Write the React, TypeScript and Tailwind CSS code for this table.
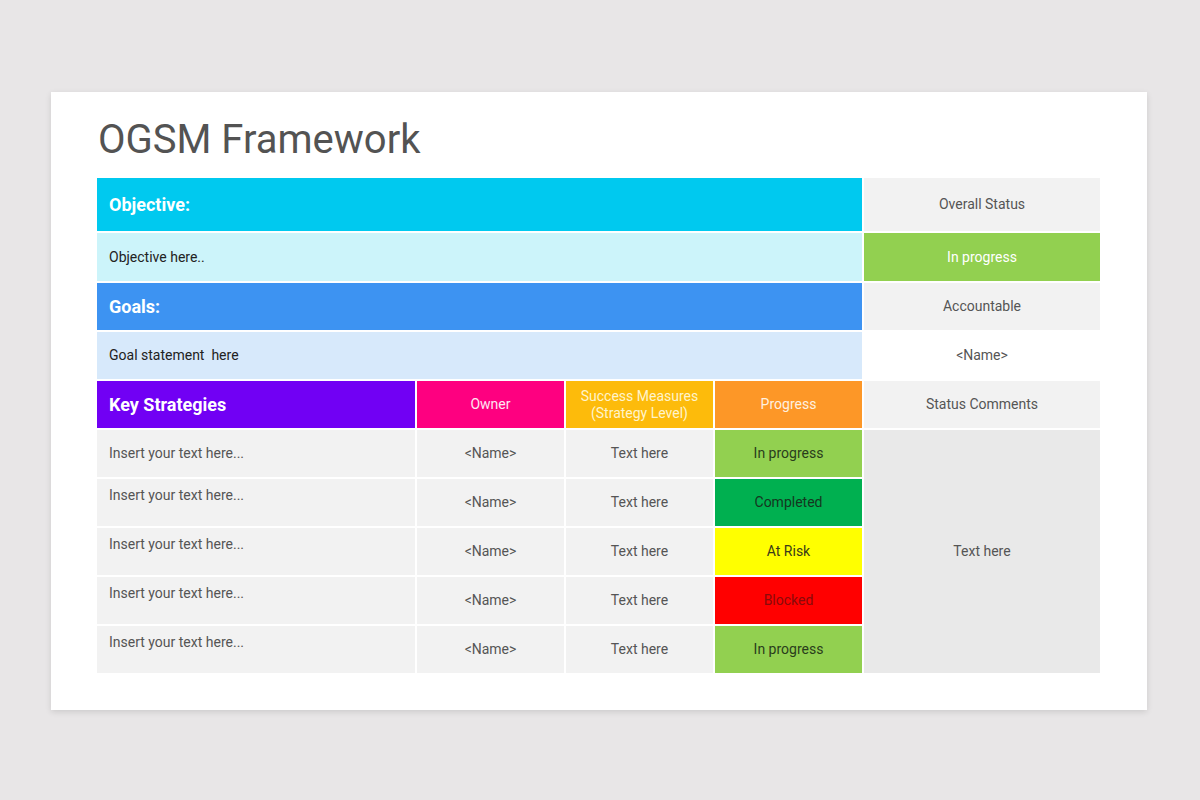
import React from "react";

const font = { fontFamily: "Roboto, 'Liberation Sans', sans-serif" };

const rows = [
  { status: "In progress", bg: "bg-[#92d050]", fg: "text-[#2a3d1c]", center: true },
  { status: "Completed", bg: "bg-[#00b050]", fg: "text-[#15361f]", center: false },
  { status: "At Risk", bg: "bg-[#ffff00]", fg: "text-[#3a3a1a]", center: false },
  { status: "Blocked", bg: "bg-[#ff0000]", fg: "text-[#8a0a0a]", center: false },
  { status: "In progress", bg: "bg-[#92d050]", fg: "text-[#2a3d1c]", center: false },
];

export default function App() {
  return (
    <div className="w-[1200px] h-[800px] bg-[#e8e6e7] pt-[92px] pl-[51px]" style={font}>
      <div className="w-[1096px] h-[618px] bg-white shadow-[0_2px_6px_rgba(0,0,0,0.12)] pl-[46px] pt-[28px]">
        <h1 className="ml-[1px] text-[40px] leading-[40px] text-[#535353] font-normal">OGSM Framework</h1>
        <div className="mt-[18px] grid grid-cols-[318px_147px_147px_147px_236px] grid-rows-[53px_48px_47px_47px_47px_47px_47px_47px_47px_47px] gap-[2px] text-[14px]">
          <div className="col-span-4 bg-[#00c9ef] flex items-center pl-3 text-white font-bold text-[18px]">Objective:</div>
          <div className="bg-[#f2f2f2] flex items-center justify-center text-[#555]">Overall Status</div>

          <div className="col-span-4 bg-[#ccf4fa] flex items-center pl-3 text-[#222]">Objective here..</div>
          <div className="bg-[#92d050] flex items-center justify-center text-white">In progress</div>

          <div className="col-span-4 bg-[#3d93f2] flex items-center pl-3 text-white font-bold text-[18px]">Goals:</div>
          <div className="bg-[#f2f2f2] flex items-center justify-center text-[#555]">Accountable</div>

          <div className="col-span-4 bg-[#d7e9fb] flex items-center pl-3 text-[#222]">Goal statement&nbsp; here</div>
          <div className="bg-white flex items-center justify-center text-[#555]">&lt;Name&gt;</div>

          <div className="bg-[#7100f4] flex items-center pl-3 text-white font-bold text-[18px]">Key Strategies</div>
          <div className="bg-[#fe0080] flex items-center justify-center text-[#ffe6f2]">Owner</div>
          <div className="bg-[#fdbb0b] flex items-center justify-center text-center text-[#fff4cc] leading-[17px]">
            Success Measures
            <br />
            (Strategy Level)
          </div>
          <div className="bg-[#fd9727] flex items-center justify-center text-[#fff1e0]">Progress</div>
          <div className="bg-[#f2f2f2] flex items-center justify-center text-[#555]">Status Comments</div>

          {rows.map((r, i) => (
            <React.Fragment key={i}>
              <div
                className={
                  r.center
                    ? "bg-[#f2f2f2] flex items-center pl-3 text-[#555]"
                    : "bg-[#f2f2f2] flex items-start pt-[6px] pl-3 text-[#555]"
                }
              >
                Insert your text here...
              </div>
              <div className="bg-[#f2f2f2] flex items-center justify-center text-[#555]">&lt;Name&gt;</div>
              <div className="bg-[#f2f2f2] flex items-center justify-center text-[#555]">Text here</div>
              <div className={`${r.bg} ${r.fg} flex items-center justify-center`}>{r.status}</div>
              {i === 0 && (
                <div className="row-span-5 bg-[#e9e9e9] flex items-center justify-center text-[#555]">Text here</div>
              )}
            </React.Fragment>
          ))}
        </div>
      </div>
    </div>
  );
}
